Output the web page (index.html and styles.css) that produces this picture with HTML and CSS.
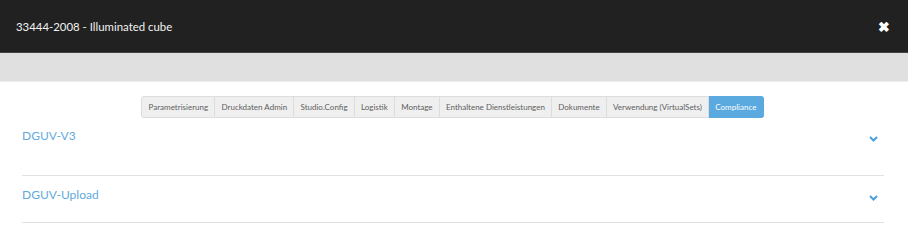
FILE: index.html
```html
<!DOCTYPE html>
<html lang="de">
<head>
    <meta charset="UTF-8">
    <title>33444-2008 - Illuminated cube</title>
    <link rel="stylesheet" href="styles.css">
</head>
<body>
    <header class="modal-header">
        <h1>33444-2008 - Illuminated cube</h1>
        <span class="close">&#10006;</span>
    </header>
    <div class="toolbar"></div>

    <nav class="tabs">
        <a href="#">Parametrisierung</a>
        <a href="#">Druckdaten Admin</a>
        <a href="#">Studio.Config</a>
        <a href="#">Logistik</a>
        <a href="#">Montage</a>
        <a href="#">Enthaltene Dienstleistungen</a>
        <a href="#">Dokumente</a>
        <a href="#">Verwendung (VirtualSets)</a>
        <a href="#" class="active">Compliance</a>
    </nav>

    <section class="panel first">
        <h2>DGUV-V3</h2>
        <svg class="chevron" width="9" height="6" viewBox="0 0 9 6"><path d="M1 1l3.5 3.5L8 1" fill="none" stroke="#4a9fe0" stroke-width="2"/></svg>
    </section>
    <section class="panel">
        <h2>DGUV-Upload</h2>
        <svg class="chevron" width="9" height="6" viewBox="0 0 9 6"><path d="M1 1l3.5 3.5L8 1" fill="none" stroke="#4a9fe0" stroke-width="2"/></svg>
    </section>
</body>
</html>
```

FILE: styles.css
```css
body {
    margin: 0;
    font-family: Lato, "Open Sans", sans-serif;
    background: #fff;
}

.modal-header {
    background: #212121;
    height: 52px;
    display: flex;
    align-items: center;
    justify-content: space-between;
    padding: 0 18px 0 16px;
    border-bottom: 1px solid #444;
}

.modal-header h1 {
    margin: 0;
    font-size: 11.4px;
    font-weight: normal;
    color: #f2f2f2;
}

.close {
    color: #fff;
    font-size: 14px;
    font-weight: bold;
}

.toolbar {
    background: #e0e0e0;
    height: 28px;
    border-bottom: 1px solid #ececec;
}

.tabs {
    display: flex;
    justify-content: center;
    margin-top: 14px;
    margin-right: 3px;
}

.tabs a {
    height: 20px;
    line-height: 20px;
    padding: 0 6.2px;
    font-size: 8px;
    color: #5e5e5e;
    text-decoration: none;
    background: #efefef;
    border: 1px solid #ddd;
    border-left: none;
}

.tabs a:first-child {
    border-left: 1px solid #ddd;
    border-radius: 3px 0 0 3px;
}

.tabs a.active {
    background: #5aa9df;
    border-color: #5aa9df;
    color: #fff;
    border-radius: 0 3px 3px 0;
}

.panel {
    margin: 0 24px 0 22px;
    display: flex;
    align-items: center;
    justify-content: space-between;
    padding: 12px 6px 20px 0;
    border-bottom: 1px solid #e2e2e2;
}

.panel.first {
    padding: 11px 6px 32px 0;
}

.panel h2 {
    margin: 0;
    font-size: 12px;
    line-height: 14px;
    font-weight: normal;
    color: #62a9de;
}

.chevron {
    margin-top: 5px;
}
```
